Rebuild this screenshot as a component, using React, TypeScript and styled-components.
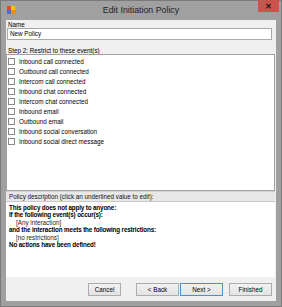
import React from "react";
import styled, { createGlobalStyle } from "styled-components";

const Global = createGlobalStyle`
  html, body { margin: 0; padding: 0; background: #ffffff; }
  * { box-sizing: border-box; }
`;

const FONT = `"Liberation Sans", Arial, sans-serif`;

const Window = styled.div`
  width: 282px;
  height: 307px;
  background: #a0a0a0;
  border: 1px solid #7a7a7a;
  display: flex;
  flex-direction: column;
  padding: 0 5px 5px 5px;
  font-family: ${FONT};
`;

const TitleBar = styled.div`
  height: 19px;
  display: flex;
  align-items: center;
  position: relative;
`;

const AppIcon = styled.svg`
  width: 8px;
  height: 8px;
  margin-left: 1px;
  margin-top: -1px;
`;

const Title = styled.div`
  position: absolute;
  left: 0;
  right: 0;
  top: 4px;
  text-align: center;
  font-size: 8.8px;
  color: #222;
  pointer-events: none;
`;

const CloseButton = styled.div`
  position: absolute;
  right: -3px;
  top: -1px;
  width: 21px;
  height: 12px;
  background: #c9544b;
  display: flex;
  align-items: center;
  justify-content: center;
  color: #1a1a1a;
  font-size: 8px;
  font-weight: bold;
`;

const Content = styled.div`
  flex: 1;
  background: #f0f0f0;
  display: flex;
  flex-direction: column;
`;

const FieldLabel = styled.div`
  font-size: 6.3px;
  color: #000;
  padding-left: 2px;
  height: 7px;
  line-height: 7px;
  margin-top: 1px;
`;

const NameInput = styled.div`
  margin: 0 4px 0 1px;
  height: 12px;
  background: #fff;
  border: 1px solid #a9a9a9;
  font-size: 6.3px;
  color: #000;
  padding-left: 2px;
  line-height: 10px;
`;

const StepLabel = styled.div`
  margin-top: 7px;
  font-size: 6.3px;
  color: #000;
  padding-left: 2px;
  height: 7px;
  line-height: 7px;
`;

const ListBox = styled.div`
  margin: 0 1px 0 0;
  height: 137px;
  background: #fff;
  border: 1px solid #a0a0a0;
  padding: 1px 0 0 1px;
  display: flex;
  flex-direction: column;
`;

const Row = styled.label`
  height: 10px;
  display: flex;
  align-items: center;
  gap: 4px;
  font-size: 6.3px;
  color: #000;
`;

const Box = styled.span`
  width: 7px;
  height: 7px;
  border: 1px solid #8a8a8a;
  background: #fff;
  flex: none;
`;

const DescHeader = styled.div`
  margin-right: 1px;
  height: 11px;
  background: #e8e8e8;
  border-bottom: 1px solid #c9c9c9;
  border-top: 1px solid #d4d4d4;
  font-size: 6.3px;
  color: #111;
  padding-left: 3px;
  line-height: 9px;
`;

const DescBody = styled.div`
  margin-right: 1px;
  height: 75px;
  background: #fff;
  padding: 2px 0 0 3px;
  display: flex;
  flex-direction: column;
`;

const DescLine = styled.div<{ $indent?: boolean }>`
  height: 7.4px;
  line-height: 7.4px;
  font-size: 6.3px;
  font-weight: ${(p) => (p.$indent ? "normal" : "bold")};
  color: ${(p) => (p.$indent ? "#222" : "#000")};
  padding-left: ${(p) => (p.$indent ? "7px" : "0")};
  letter-spacing: ${(p) => (p.$indent ? "0" : "-0.15px")};
`;

const Footer = styled.div`
  flex: 1;
  display: flex;
  justify-content: flex-end;
  align-items: flex-start;
  padding: 6px 4px 0 0;
`;

const Button = styled.div<{ $w: number; $gap: number; $default?: boolean }>`
  width: ${(p) => p.$w}px;
  height: 13px;
  margin-left: ${(p) => p.$gap}px;
  border: 1px solid ${(p) => (p.$default ? "#4f8ec7" : "#acacac")};
  background: linear-gradient(#f2f2f2, #e3e3e3);
  font-size: 6.3px;
  color: #000;
  display: flex;
  align-items: center;
  justify-content: center;
`;

const events = [
  "Inbound call connected",
  "Outbound call connected",
  "Intercom call connected",
  "Inbound chat connected",
  "Intercom chat connected",
  "Inbound email",
  "Outbound email",
  "Inbound social conversation",
  "Inbound social direct message",
];

export default function App() {
  return (
    <>
      <Global />
      <Window>
        <TitleBar>
          <AppIcon viewBox="0 0 8 8">
            <rect x="0" y="0" width="4" height="4" fill="#e8472e" />
            <rect x="4" y="0" width="4" height="4" fill="#f4c21c" />
            <rect x="0" y="4" width="4" height="4" fill="#3a78d8" />
            <rect x="4" y="4" width="4" height="4" fill="#f08a24" />
          </AppIcon>
          <Title>Edit Initiation Policy</Title>
          <CloseButton>✕</CloseButton>
        </TitleBar>
        <Content>
          <FieldLabel>Name</FieldLabel>
          <NameInput>New Policy</NameInput>
          <StepLabel>Step 2: Restrict to these event(s)</StepLabel>
          <ListBox>
            {events.map((e) => (
              <Row key={e}>
                <Box />
                {e}
              </Row>
            ))}
          </ListBox>
          <DescHeader>Policy description (click an underlined value to edit):</DescHeader>
          <DescBody>
            <DescLine>This policy does not apply to anyone:</DescLine>
            <DescLine>If the following event(s) occur(s):</DescLine>
            <DescLine $indent>[Any interaction]</DescLine>
            <DescLine>and the interaction meets the following restrictions:</DescLine>
            <DescLine $indent>[no restrictions]</DescLine>
            <DescLine>No actions have been defined!</DescLine>
          </DescBody>
          <Footer>
            <Button $w={33} $gap={0}>Cancel</Button>
            <Button $w={43} $gap={15}>&lt; Back</Button>
            <Button $w={43} $gap={1} $default>Next &gt;</Button>
            <Button $w={43} $gap={6}>Finished</Button>
          </Footer>
        </Content>
      </Window>
    </>
  );
}
